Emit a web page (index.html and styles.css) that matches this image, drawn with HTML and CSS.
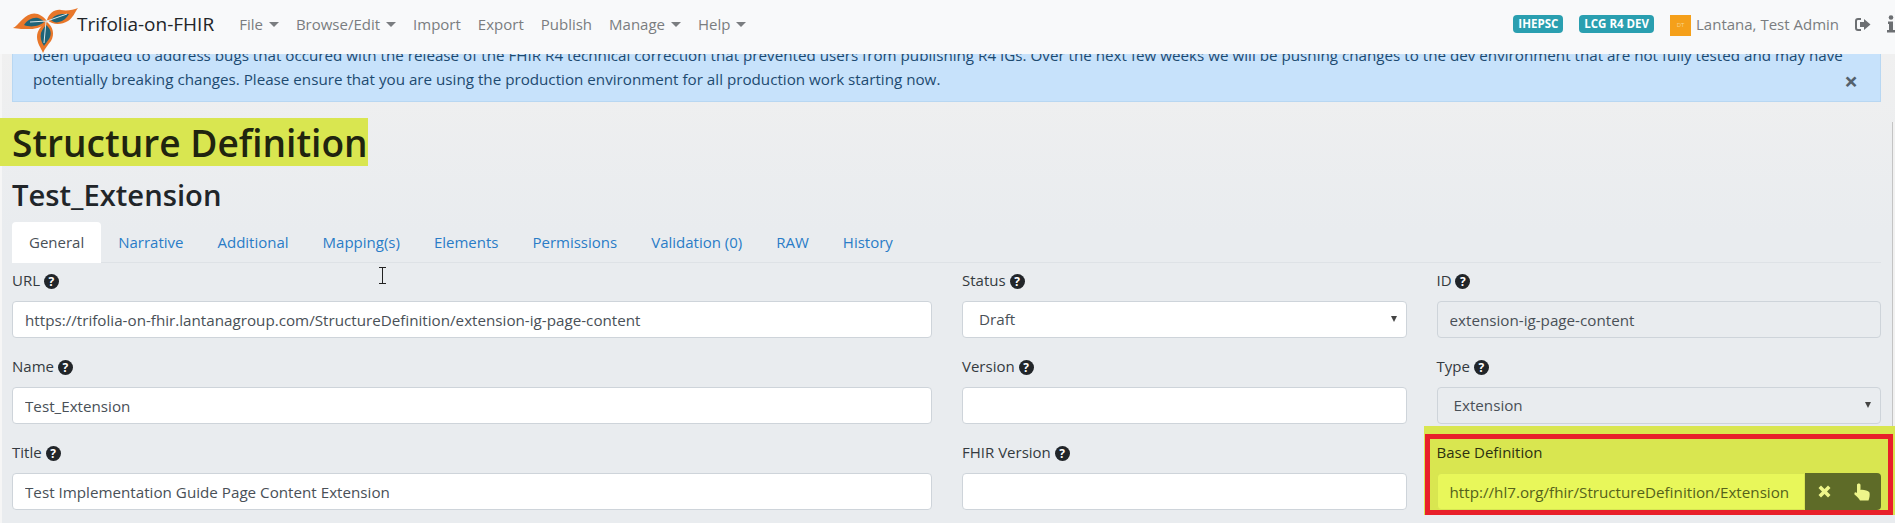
FILE: index.html
```html
<!DOCTYPE html>
<html>
<head>
	<title>Trifolia-on-FHIR</title>
	<link rel="stylesheet" href="styles.css">
</head>
<body>
	<nav class="navbar">
		<svg class="logo" width="66" height="47" viewBox="0 0 66 47">
			<path d="M0 21C6 18 9 10 18 7C24 5 30 9 34 14C30 20 24 22 17 22C11 22 5 22 0 21Z" fill="#e8772a"/>
			<path d="M34 13C36 6 42 2 48 3C54 4 60 3 65 1C62 5 60 11 55 14C48 18 40 18 34 13Z" fill="#e8772a"/>
			<path d="M34 15C40 20 42 27 38 34C35 38 32 41 30 46C28 41 24 36 24 30C24 24 28 18 34 15Z" fill="#e8772a"/>
			<path d="M11 18C14 13 20 10 25 11C28 12 30 13 31 15C27 19 18 21 11 18Z" fill="#1f6478"/>
			<path d="M38 13C40 9 46 7 50 7L56 7C54 11 50 14 46 15C43 16 40 15 38 13Z" fill="#1f6478"/>
			<path d="M33 18C38 22 39 27 36 32C34 35 32 37 31 39C28 35 27 30 28 26C29 23 31 20 33 18Z" fill="#1f6478"/>
			<path d="M34 14L17 15M34 14L54 7M33 14L31 36" stroke="#d8e6ea" stroke-width="1" fill="none"/>
		</svg>
		<a class="brand">Trifolia-on-FHIR</a>
		<ul class="menu">
			<li class="caret">File</li>
			<li class="caret">Browse/Edit</li>
			<li>Import</li>
			<li>Export</li>
			<li>Publish</li>
			<li class="caret">Manage</li>
			<li class="caret">Help</li>
		</ul>
		<div class="nav_right">
			<span class="badge">IHEPSC</span>
			<span class="badge">LCG R4 DEV</span>
			<span class="avatar">DT</span>
			<span class="user">Lantana, Test Admin</span>
			<svg class="signout" width="16" height="13" viewBox="0 0 16 13">
				<path d="M6 1H3C1.5 1 1 2 1 3V10C1 11 1.5 12 3 12H6" fill="none" stroke="#6c6f72" stroke-width="2"/>
				<path d="M9 1L15.5 6.5L9 12V9H5V4H9Z" fill="#6c6f72"/>
			</svg>
			<svg class="info" width="8" height="18" viewBox="0 0 8 18">
				<circle cx="4" cy="2.5" r="2.3" fill="#6c6f72"/>
				<path d="M1 6.5H6V15H8V17.5H0V15H2V9H1Z" fill="#6c6f72"/>
			</svg>
		</div>
	</nav>

	<div class="alert">
		<p class="alert_text">been updated to address bugs that occured with the release of the FHIR R4 technical correction that prevented users from publishing R4 IGs. Over the next few weeks we will be pushing changes to the dev environment that are not fully tested and may have potentially breaking changes. Please ensure that you are using the production environment for all production work starting now.</p>
		<span class="alert_close">&times;</span>
	</div>

	<main class="content">
		<h1 class="page_title">Structure Definition</h1>
		<h2 class="sub_title">Test_Extension</h2>

		<ul class="tabs">
			<li class="tab active">General</li>
			<li class="tab">Narrative</li>
			<li class="tab">Additional</li>
			<li class="tab">Mapping(s)</li>
			<li class="tab">Elements</li>
			<li class="tab">Permissions</li>
			<li class="tab">Validation (0)</li>
			<li class="tab">RAW</li>
			<li class="tab">History</li>
		</ul>

		<div class="fields">
			<div class="field">
				<label>URL <span class="help">?</span></label>
				<input class="input" value="https://trifolia-on-fhir.lantanagroup.com/StructureDefinition/extension-ig-page-content">
			</div>
			<div class="field">
				<label>Status <span class="help">?</span></label>
				<div class="input select">Draft</div>
			</div>
			<div class="field">
				<label>ID <span class="help">?</span></label>
				<input class="input disabled" value="extension-ig-page-content">
			</div>

			<div class="field">
				<label>Name <span class="help">?</span></label>
				<input class="input" value="Test_Extension">
			</div>
			<div class="field">
				<label>Version <span class="help">?</span></label>
				<input class="input">
			</div>
			<div class="field">
				<label>Type <span class="help">?</span></label>
				<div class="input select disabled">Extension</div>
			</div>

			<div class="field">
				<label>Title <span class="help">?</span></label>
				<input class="input" value="Test Implementation Guide Page Content Extension">
			</div>
			<div class="field">
				<label>FHIR Version <span class="help">?</span></label>
				<input class="input">
			</div>
			<div class="field marked">
				<label>Base Definition</label>
				<div class="input_group">
					<input class="input" value="http://hl7.org/fhir/StructureDefinition/Extension">
					<div class="group_buttons">
						<svg width="13" height="13" viewBox="0 0 13 13">
							<path d="M3 0.5L6.5 4L10 0.5L12.5 3L9 6.5L12.5 10L10 12.5L6.5 9L3 12.5L0.5 10L4 6.5L0.5 3Z" fill="#eef58a"/>
						</svg>
						<svg width="16" height="18" viewBox="0 0 16 18">
							<path d="M3 2C3 0 6.5 0 6.5 2V7C9 6.5 14 7.5 15.5 9.5C16 12 15.5 15 14.5 17.5H6C5 15.5 3 13.5 0.5 11.5C0 9.5 1.5 8.5 3 10Z" fill="#eef58a"/>
						</svg>
					</div>
				</div>
			</div>
		</div>
	</main>

	<div class="scroll_edge"></div>
	<svg class="text_cursor" width="9" height="17" viewBox="0 0 9 17">
		<path d="M1 0.5H8M4.5 0.5V16.5M1 16.5H8" stroke="#222" stroke-width="1" fill="none"/>
	</svg>
</body>
</html>
```

FILE: styles.css
```css
html, body {
	height: 100%;
	margin: 0;
	overflow: hidden;
}

body {
	background: linear-gradient(#f0f0f0 54px, #e9ecef 230px);
	box-shadow: inset 2px 0 0 #f6f6f6;
	color: #212529;
	font-family: "Open Sans", "Liberation Sans", sans-serif;
	font-size: 15px;
	line-height: 24px;
	position: relative;
}

.navbar {
	display: flex;
	align-items: center;
	height: 54px;
	box-sizing: border-box;
	padding: 0 0 6px 13px;
	background-color: #f8f9fa;
	white-space: nowrap;
}
.logo {
	flex: none;
	margin-top: 13px;
}
.brand {
	font-size: 19px;
	margin-left: -2px;
	margin-right: 25px;
}
.menu {
	display: flex;
	gap: 17px;
	list-style: none;
	margin: 0;
	padding: 0;
	color: #7a7d80;
}
.caret::after {
	content: "";
	display: inline-block;
	margin-left: 6px;
	vertical-align: 3px;
	border-top: 5px solid #7a7d80;
	border-left: 5px solid transparent;
	border-right: 5px solid transparent;
}
.nav_right {
	display: flex;
	align-items: center;
	margin-left: auto;
	color: #7a7d80;
}
.badge {
	background-color: #2a9fb0;
	color: white;
	font-size: 11.5px;
	font-weight: 700;
	line-height: 18px;
	padding: 0 5px;
	border-radius: 4px;
	margin-right: 16px;
}
.avatar {
	width: 21px;
	height: 21px;
	margin-top: 2px;
	background-color: #f5a01a;
	color: #f8d48a;
	font-size: 6px;
	line-height: 21px;
	text-align: center;
	margin-right: 5px;
}
.signout {
	margin-left: 16px;
}
.info {
	margin-left: 16px;
}

.alert {
	display: flex;
	flex-direction: column;
	justify-content: flex-end;
	position: relative;
	height: 48px;
	margin: 0 14px 0 12px;
	padding: 0 30px 10px 20px;
	box-sizing: border-box;
	overflow: hidden;
	background-color: #c7e2fb;
	border: 1px solid #b8d7f2;
	border-top: 0;
	color: #1d4a70;
	font-size: 15.2px;
}
.alert_text {
	margin: 0;
}
.alert_close {
	position: absolute;
	right: 22px;
	bottom: 8px;
	font-size: 24px;
	font-weight: 700;
	color: #54616c;
}

.content {
	padding: 16px 14px 0 12px;
}
.page_title {
	width: fit-content;
	box-sizing: border-box;
	height: 48px;
	margin: 0 0 0 -12px;
	padding: 2px 0 0 12px;
	background-color: #d9e650;
	font-size: 37.1px;
	font-weight: 600;
	line-height: 46px;
	color: #20240f;
}
.sub_title {
	margin: 9px 0 0;
	font-size: 29.2px;
	font-weight: 600;
	line-height: 40px;
}

.tabs {
	display: flex;
	list-style: none;
	margin: 7px 0 0;
	padding: 0;
	height: 40px;
	border-bottom: 1px solid #dee2e6;
}
.tab {
	padding: 8px 17px;
	color: #2a7cc7;
}
.tab.active {
	background-color: white;
	color: #495057;
	height: 25px;
	border-radius: 4px 4px 0 0;
}

.fields {
	display: grid;
	grid-template-columns: 920px 1fr 1fr;
	column-gap: 30px;
	row-gap: 17px;
	margin-top: 6px;
}
.field {
	position: relative;
}
.field label {
	display: block;
	height: 24px;
	margin-bottom: 8px;
	color: #343a40;
	line-height: 22px;
}
.help {
	display: inline-block;
	width: 15px;
	height: 15px;
	border-radius: 50%;
	background-color: #212529;
	color: white;
	font-size: 12px;
	font-weight: 700;
	line-height: 15px;
	text-align: center;
}
.input {
	display: block;
	width: 100%;
	height: 37px;
	box-sizing: border-box;
	padding: 0 12px;
	background-color: white;
	border: 1px solid #ced4da;
	border-radius: 4px;
	color: #495057;
	font-family: inherit;
	font-size: 15.2px;
	line-height: 35px;
}
.select {
	position: relative;
	padding-left: 16px;
}
.select::after {
	content: "";
	position: absolute;
	right: 9px;
	top: 14px;
	border-top: 6px solid #444;
	border-left: 3.5px solid transparent;
	border-right: 3.5px solid transparent;
}
.disabled {
	background-color: #e9ecef;
}

.marked::before {
	content: "";
	position: absolute;
	z-index: -1;
	top: -15px;
	left: -13px;
	right: -14px;
	bottom: -5px;
	background-color: #d9e650;
}
.marked::after {
	content: "";
	position: absolute;
	top: -7px;
	left: -12px;
	right: -12px;
	bottom: -5px;
	border: 5px solid #e8202a;
}
.marked label {
	color: #2c3110;
}
.input_group {
	display: flex;
}
.input_group .input {
	flex: 1;
	min-width: 0;
	background-color: #e8f75a;
	border-color: #d7e552;
	border-radius: 4px 0 0 4px;
	color: #55621a;
}
.group_buttons {
	display: flex;
	flex: none;
	align-items: center;
	gap: 23px;
	width: 76px;
	box-sizing: border-box;
	padding-left: 13px;
	background-color: #5e6b28;
	border-radius: 0 4px 4px 0;
}

.scroll_edge {
	position: absolute;
	right: 0;
	top: 122px;
	width: 2px;
	height: 304px;
	background-color: #f1f1f1;
	border-left: 1px solid #c4c4c4;
}
.text_cursor {
	position: absolute;
	left: 378px;
	top: 267px;
}
```
